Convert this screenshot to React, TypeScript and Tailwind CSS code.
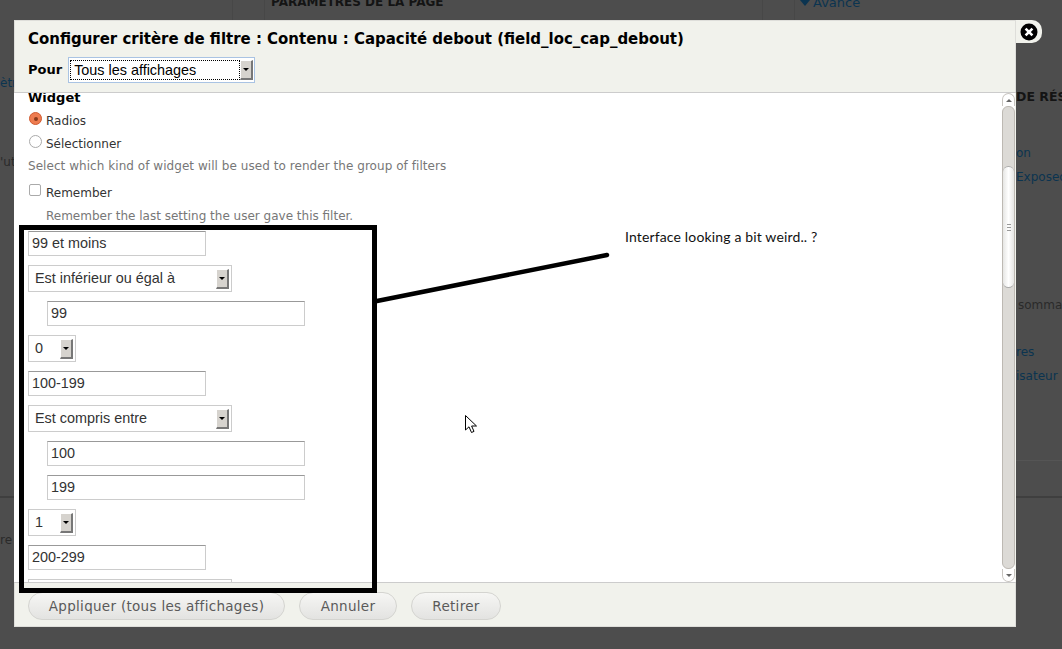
import React from "react";

const dejavu = "font-['DejaVu_Sans',sans-serif]";
const arial = "font-['Liberation_Sans',Arial,sans-serif]";

function TextField({ value, wide }: { value: string; wide?: boolean }) {
  return (
    <input
      readOnly
      value={value}
      className={`${arial} ${wide ? "ml-[19px] w-[258px]" : "w-[178px]"} h-[25px] shrink-0 border border-[#ccc] border-t-[#999] bg-white pb-[2px] pl-[3px] pr-[2px] text-[14.4px] text-[#333] outline-none`}
    />
  );
}

function SelectArrow() {
  return (
    <div className="flex h-[20px] w-[13px] shrink-0 items-center justify-center border-r-2 border-b-2 border-r-[#777] border-b-[#777] border-l border-t border-l-white border-t-white bg-[#d6d3ce]">
      <div className="h-0 w-0 border-x-[3px] border-t-[3px] border-x-transparent border-t-black" />
    </div>
  );
}

function FakeSelect({ value, width }: { value: string; width: string }) {
  return (
    <div className={`${arial} ${width} flex h-[27px] shrink-0 items-center justify-between border border-[#ccc] bg-white pl-[6px] pr-[2px] text-[14.4px] text-[#333]`}>
      <span>{value}</span>
      <SelectArrow />
    </div>
  );
}

function GhostButton({ label, width }: { label: string; width: string }) {
  return (
    <button className={`${dejavu} ${width} h-[28px] rounded-full border border-[#d4d4d0] bg-gradient-to-b from-[#f6f6f4] to-[#e3e3e1] text-[13.5px] tracking-[0.3px] text-[#5a5a5a]`}>
      {label}
    </button>
  );
}

function Scrollbar() {
  return (
    <div className="flex h-full w-[13px] shrink-0 flex-col bg-white">
      <div className="flex h-[13px] shrink-0 items-center justify-center rounded-t-full border-x border-t border-[#c8c5c0]">
        <div className="h-0 w-0 border-x-[3px] border-b-[3px] border-x-transparent border-b-[#666]" />
      </div>
      <div className="min-h-0 flex-1 rounded-[6px] border border-[#bdb9b3] bg-[#dcdad6] pt-[59px]">
        <div className="flex h-[122px] items-center justify-center rounded-full border-y border-[#aaa] bg-gradient-to-r from-[#e6e6e4] via-white to-[#e6e6e4]">
          <div className="flex flex-col gap-[2px]">
            <div className="h-px w-[4px] bg-[#999]" />
            <div className="h-px w-[4px] bg-[#999]" />
            <div className="h-px w-[4px] bg-[#999]" />
          </div>
        </div>
      </div>
      <div className="flex h-[13px] shrink-0 items-center justify-center rounded-b-full border-x border-b border-[#c8c5c0]">
        <div className="h-0 w-0 border-x-[3px] border-t-[3px] border-x-transparent border-t-[#666]" />
      </div>
    </div>
  );
}

function Dialog() {
  return (
    <div className="absolute left-[14px] top-[20px] flex h-[607px] w-[1002px] flex-col bg-[#f1f2ec] shadow-[inset_0_0_0_1px_#dededa]">
      {/* titre */}
      <div className="h-[73px] shrink-0 border-b border-[#ccc] pl-[14px]">
        <h1 className={`${dejavu} pt-[10px] text-[14.96px] font-bold leading-[18px] text-black`}>
          Configurer critère de filtre : Contenu : Capacité debout (field_loc_cap_debout)
        </h1>
        <div className="mt-[9px] flex items-center gap-[6px]">
          <span className={`${dejavu} text-[13px] font-bold text-black`}>Pour</span>
          <div className={`${arial} flex h-[26px] w-[187px] items-center border border-[#a9c3e3] bg-white px-[1px] text-[14.4px] text-black`}>
            <span className="flex h-[20px] flex-1 items-center border border-dotted border-black pl-[3px] pt-[1px]">Tous les affichages</span>
            <SelectArrow />
          </div>
        </div>
      </div>

      {/* contenu */}
      <div className="flex min-h-0 flex-1 bg-white">
        <div className={`${dejavu} min-w-0 flex-1 overflow-hidden pl-[14px] text-[12px] leading-[15px] text-[#333]`}>
          <div className="mt-[-3px] text-[13px] font-bold text-black">Widget</div>
          <div className="mt-[9px] flex items-start gap-[4px] pl-px">
            <span className="mt-[-2px] flex h-[13px] w-[13px] items-center justify-center rounded-full border border-[#d05a30] bg-[#ee7c50]">
              <span className="h-[4px] w-[4px] rounded-full bg-[#8a3a1c]" />
            </span>
            <span>Radios</span>
          </div>
          <div className="mt-[8px] flex items-start gap-[4px] pl-px">
            <span className="mt-[-2px] h-[13px] w-[13px] rounded-full border border-[#aaa] bg-white" />
            <span>Sélectionner</span>
          </div>
          <p className="mt-[7px] tracking-[0.05px] text-[#777]">Select which kind of widget will be used to render the group of filters</p>
          <div className="mt-[12px] flex items-start gap-[5px] pl-px">
            <span className="mt-[-2px] h-[12px] w-[12px] rounded-[2px] border border-[#aaa] bg-white" />
            <span>Remember</span>
          </div>
          <p className="mt-[8px] pl-[18px] text-[#777]">Remember the last setting the user gave this filter.</p>

          <div className="mt-[7px] flex flex-col items-start gap-[9px]">
            <TextField value="99 et moins" />
            <FakeSelect value="Est inférieur ou égal à" width="w-[204px]" />
            <TextField value="99" wide />
            <FakeSelect value="0" width="w-[48px]" />
            <TextField value="100-199" />
            <FakeSelect value="Est compris entre" width="w-[204px]" />
            <TextField value="100" wide />
            <TextField value="199" wide />
            <FakeSelect value="1" width="w-[48px]" />
            <TextField value="200-299" />
            <FakeSelect value="" width="w-[204px]" />
          </div>
        </div>
        <Scrollbar />
        <div className="w-px shrink-0 bg-[#f1f2ec]" />
      </div>

      {/* boutons */}
      <div className="flex h-[45px] shrink-0 gap-[14px] border-t border-[#ccc] pl-[14px] pt-[9px]">
        <GhostButton label="Appliquer (tous les affichages)" width="w-[257px]" />
        <GhostButton label="Annuler" width="w-[98px]" />
        <GhostButton label="Retirer" width="w-[90px]" />
      </div>

      {/* onglet de fermeture */}
      <div className="absolute left-[1002px] top-0 flex h-[23px] w-[26px] items-center justify-end rounded-r-[10px] bg-[#f1f2ec] pr-[4px]">
        <svg width="18" height="18" viewBox="0 0 18 18">
          <circle cx="9" cy="9" r="8.5" fill="#000" />
          <path d="M5.6 5.6 12.4 12.4 M12.4 5.6 5.6 12.4" stroke="#fff" strokeWidth="2.6" />
        </svg>
      </div>
    </div>
  );
}

function Annotation() {
  return (
    <>
      <div className="absolute left-[19px] top-[225px] h-[368px] w-[358px] border-[5px] border-black" />
      <svg className="absolute left-[370px] top-[248px]" width="245" height="60" viewBox="0 0 245 60">
        <line x1="7" y1="53" x2="237" y2="7" stroke="#000" strokeWidth="4.5" strokeLinecap="round" />
      </svg>
      <span className="absolute left-[625px] top-[229px] font-['Lato',sans-serif] text-[14px] leading-[16px] tracking-[0.15px] text-[#111]">
        Interface looking a bit weird.. ?
      </span>
      <svg className="absolute left-[464px] top-[414px]" width="14" height="20" viewBox="0 0 14 20">
        <path d="M1.5 1.5V16L5 12.8 7.5 18.5 10 17.4 7.6 12H12.5Z" fill="#fff" stroke="#000" strokeWidth="1" />
      </svg>
    </>
  );
}

// la page derrière le voile sombre
function BackgroundPage() {
  return (
    <div className={`${dejavu} flex h-full flex-col text-[12px] leading-[15px] text-[#0b3450]`}>
      <div className="flex h-[20px] shrink-0">
        <div className="ml-[232px] h-full w-[33px] border-x border-[#474747]" />
        <div className="ml-[6px] mt-[-5px] w-[491px] font-bold text-[#141414]">PARAMÈTRES DE LA PAGE</div>
        <div className="h-full w-[33px] border-x border-[#474747]" />
        <div className="ml-[5px] mt-[-5px] flex items-center gap-[3px] self-start text-[13px]">
          <span className="h-0 w-0 border-x-[5px] border-t-[6px] border-x-transparent border-t-[#0b3450]" />
          Avancé
        </div>
      </div>
      <div className="flex h-[478px] shrink-0 justify-between border-b-2 border-[#3f3f3f]">
        <div className="w-[14px] overflow-hidden whitespace-nowrap">
          <div className="mt-[56px]">ètr</div>
          <div className="mt-[64px] text-[#2a2a2a]">'ut</div>
        </div>
        <div className="w-[46px] overflow-hidden whitespace-nowrap">
          <div className="mt-[69px] text-[12.5px] font-bold text-[#141414]">DE RÉSU</div>
          <div className="mt-[42px]">on</div>
          <div className="mt-[9px]">Exposed</div>
          <div className="mt-[113px] pl-[2px] text-[#2a2a2a]">sommaire</div>
          <div className="mt-[32px]">res</div>
          <div className="mt-[9px]">isateur</div>
          <div className="mt-[76px] h-px bg-[#555]" />
        </div>
      </div>
      <div className="w-[14px] overflow-hidden whitespace-nowrap pt-[35px] text-[#2a2a2a]">re</div>
    </div>
  );
}

export default function App() {
  return (
    <div className="relative h-[649px] w-[1062px] overflow-hidden bg-[#4d4d4d]">
      <BackgroundPage />
      <Dialog />
      <Annotation />
    </div>
  );
}
